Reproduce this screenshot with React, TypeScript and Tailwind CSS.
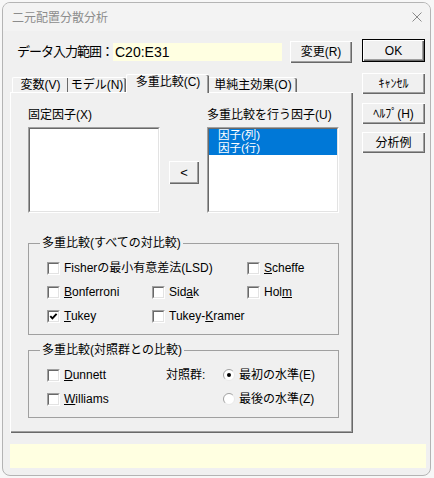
import React from "react";

const raised =
  "flex items-center justify-center bg-[#f0f0f0] shadow-[inset_1px_1px_0_#ffffff,inset_-1px_-1px_0_#696969,inset_-2px_-2px_0_#a0a0a0] text-[12px] leading-[14px] text-black";

function Btn({ className = "", children }: { className?: string; children: React.ReactNode }) {
  return <div className={`${raised} ${className}`}>{children}</div>;
}

function Check({ checked = false }: { checked?: boolean }) {
  return (
    <div className="w-[13px] h-[13px] shrink-0 border border-t-[#a0a0a0] border-l-[#a0a0a0] border-b-white border-r-white">
      <div className="w-full h-full bg-white border border-t-[#696969] border-l-[#696969] border-b-[#e3e3e3] border-r-[#e3e3e3] flex items-center justify-center">
        {checked && (
          <svg width="9" height="9" viewBox="0 0 9 9">
            <path d="M1.3 4.2 L3.4 6.4 L7.6 1.9" fill="none" stroke="#000" strokeWidth="1.9" />
          </svg>
        )}
      </div>
    </div>
  );
}

function Radio({ checked = false }: { checked?: boolean }) {
  return (
    <svg width="12" height="12" viewBox="0 0 12 12" className="shrink-0">
      <circle cx="6" cy="6" r="5.5" fill="#ffffff" />
      <path d="M2.11 9.89 A5.5 5.5 0 0 1 9.89 2.11" fill="none" stroke="#a0a0a0" strokeWidth="1" />
      <path d="M9.89 2.11 A5.5 5.5 0 0 1 2.11 9.89" fill="none" stroke="#e8e8e8" strokeWidth="1" />
      {checked && <circle cx="6" cy="6" r="2" fill="#000" />}
    </svg>
  );
}

function CheckItem({ checked, children, className = "" }: { checked?: boolean; children: React.ReactNode; className?: string }) {
  return (
    <div className={`flex items-center gap-[4px] h-[14px] ${className}`}>
      <Check checked={checked} />
      <span className="text-[12px] leading-[14px] text-black whitespace-nowrap">{children}</span>
    </div>
  );
}

function RadioItem({ checked, children }: { checked?: boolean; children: React.ReactNode }) {
  return (
    <div className="flex items-center gap-[4px] h-[14px]">
      <Radio checked={checked} />
      <span className="text-[12px] leading-[14px] text-black whitespace-nowrap">{children}</span>
    </div>
  );
}

function Group({ title, className = "", children }: { title: string; className?: string; children: React.ReactNode }) {
  return (
    <div className={`relative ml-[17px] w-[311px] border border-[#a0a0a0] ${className}`}>
      <span className="absolute left-[11px] top-[-8px] px-[2px] bg-[#f0f0f0] text-[12px] leading-[14px] text-black whitespace-nowrap">
        {title}
      </span>
      {children}
    </div>
  );
}

function ListBox({ children }: { children?: React.ReactNode }) {
  return (
    <div className="w-[132px] h-[86px] border border-t-[#a0a0a0] border-l-[#a0a0a0] border-b-white border-r-white">
      <div className="w-full h-full bg-white border border-t-[#696969] border-l-[#696969] border-b-[#e3e3e3] border-r-[#e3e3e3]">
        {children}
      </div>
    </div>
  );
}

export default function App() {
  return (
    <div className="w-[434px] h-[478px] bg-[#f7f7f7] pt-[2px] pl-[2px] font-['Liberation_Sans','Noto_Sans_CJK_JP',sans-serif]">
      <div className="w-[429px] h-[474px] rounded-[8px] border border-[#b4b4b4] bg-[#f0f0f0] overflow-hidden flex flex-col">
        {/* title bar */}
        <div className="h-[28px] shrink-0 bg-[#f3f3f3] flex items-center justify-between pl-[9px] pr-[8px]">
          <span className="text-[12px] leading-[14px] text-[#8c8c8c] font-['Noto_Sans_CJK_JP',sans-serif]">二元配置分散分析</span>
          <svg width="10" height="10" viewBox="0 0 10 10">
            <path d="M0.5 0.5 L9.5 9.5 M9.5 0.5 L0.5 9.5" stroke="#8a8a8a" strokeWidth="1" />
          </svg>
        </div>

        {/* body */}
        <div className="flex flex-col pl-[7px]">
          <div className="flex">
            {/* left column */}
            <div className="w-[343px] flex flex-col">
              <div className="mt-[10px] h-[22px] flex items-center">
                <span className="ml-[7px] w-[96px] text-[13px] leading-[16px] tracking-[-1px] text-black whitespace-nowrap">
                  データ入力範囲：
                </span>
                <div className="w-[169px] h-[18px] bg-[#ffffe1] pl-[2px] text-[14px] leading-[19px] text-black">C20:E31</div>
                <Btn className="ml-[8px] w-[62px] h-[22px]">変更(R)</Btn>
              </div>

              {/* tabs */}
              <div className="mt-[11px] h-[18px] flex items-end pl-[2px]">
                <div className="w-[56px] h-[15px] border-t border-l border-white rounded-tl-[2px] shadow-[inset_-1px_0_0_#696969] flex items-center justify-center text-[12px] leading-[14px] text-black">
                  変数(V)
                </div>
                <div className="w-[58px] h-[15px] border-t border-white rounded-tr-[2px] shadow-[inset_-1px_0_0_#696969,inset_-2px_0_0_#a0a0a0] flex items-center justify-center text-[12px] leading-[14px] text-black">
                  モデル(N)
                </div>
                <div className="relative z-10 -mb-[1px] w-[83px] h-[19px] bg-[#f0f0f0] border-t border-l border-white rounded-t-[2px] shadow-[inset_-1px_0_0_#696969,inset_-2px_0_0_#a0a0a0] flex justify-center pt-[0px] text-[12px] leading-[14px] text-black">
                  多重比較(C)
                </div>
                <div className="w-[88px] h-[15px] border-t border-white rounded-tr-[2px] shadow-[inset_-1px_0_0_#696969,inset_-2px_0_0_#a0a0a0] flex items-center justify-center text-[12px] leading-[14px] text-black">
                  単純主効果(O)
                </div>
              </div>

              {/* panel */}
              <div className="h-[341px] border-t border-l border-white shadow-[inset_-1px_-1px_0_#696969,inset_-2px_-2px_0_#a0a0a0] flex flex-col">
                <div className="pt-[15px] pl-[17px] flex">
                  <div className="flex flex-col">
                    <span className="h-[14px] text-[12px] leading-[14px] text-black">固定因子(X)</span>
                    <div className="mt-[5px]">
                      <ListBox />
                    </div>
                  </div>
                  <Btn className="ml-[9px] mt-[53px] w-[30px] h-[23px] text-[13px]">&lt;</Btn>
                  <div className="ml-[8px] flex flex-col">
                    <span className="h-[14px] text-[12px] leading-[14px] text-black whitespace-nowrap">多重比較を行う因子(U)</span>
                    <div className="mt-[5px]">
                      <ListBox>
                        <div className="h-[13px] bg-[#0078d7] text-white text-[11.5px] leading-[13px] pl-[9px] overflow-hidden">因子(列)</div>
                        <div className="h-[13px] bg-[#0078d7] text-white text-[11.5px] leading-[13px] pl-[9px] overflow-hidden">因子(行)</div>
                      </ListBox>
                    </div>
                  </div>
                </div>

                <Group title="多重比較(すべての対比較)" className="mt-[30px] h-[92px]">
                  <div className="pt-[17px] pl-[18px] grid grid-cols-[105px_95px_auto] gap-y-[10px]">
                    <CheckItem className="col-span-2">Fisherの最小有意差法(LSD)</CheckItem>
                    <CheckItem>
                      <span className="underline">S</span>cheffe
                    </CheckItem>
                    <CheckItem>
                      <span className="underline">B</span>onferroni
                    </CheckItem>
                    <CheckItem>
                      Sid<span className="underline">a</span>k
                    </CheckItem>
                    <CheckItem>
                      Hol<span className="underline">m</span>
                    </CheckItem>
                    <CheckItem checked>
                      <span className="underline">T</span>ukey
                    </CheckItem>
                    <CheckItem className="col-span-2">
                      Tukey-<span className="underline">K</span>ramer
                    </CheckItem>
                  </div>
                </Group>

                <Group title="多重比較(対照群との比較)" className="mt-[15px] h-[68px]">
                  <div className="pt-[17px] pl-[18px] grid grid-cols-[119px_57px_auto] gap-y-[10px]">
                    <CheckItem>
                      <span className="underline">D</span>unnett
                    </CheckItem>
                    <span className="h-[14px] text-[12px] leading-[14px] text-black">対照群:</span>
                    <RadioItem checked>最初の水準(E)</RadioItem>
                    <CheckItem>
                      <span className="underline">W</span>illiams
                    </CheckItem>
                    <span />
                    <RadioItem>最後の水準(Z)</RadioItem>
                  </div>
                </Group>
              </div>
            </div>

            {/* right column */}
            <div className="ml-[9px] w-[63px] flex flex-col">
              <div className={`${raised} mt-[8px] h-[23px] border border-black`}>OK</div>
              <Btn className="mt-[11px] h-[21px]">ｷｬﾝｾﾙ</Btn>
              <Btn className="mt-[9px] h-[21px]">ﾍﾙﾌﾟ(H)</Btn>
              <Btn className="mt-[8px] h-[21px]">分析例</Btn>
            </div>
          </div>

          {/* status bar */}
          <div className="mt-[11px] w-[416px] h-[24px] bg-[#ffffe1]" />
        </div>
      </div>
    </div>
  );
}
